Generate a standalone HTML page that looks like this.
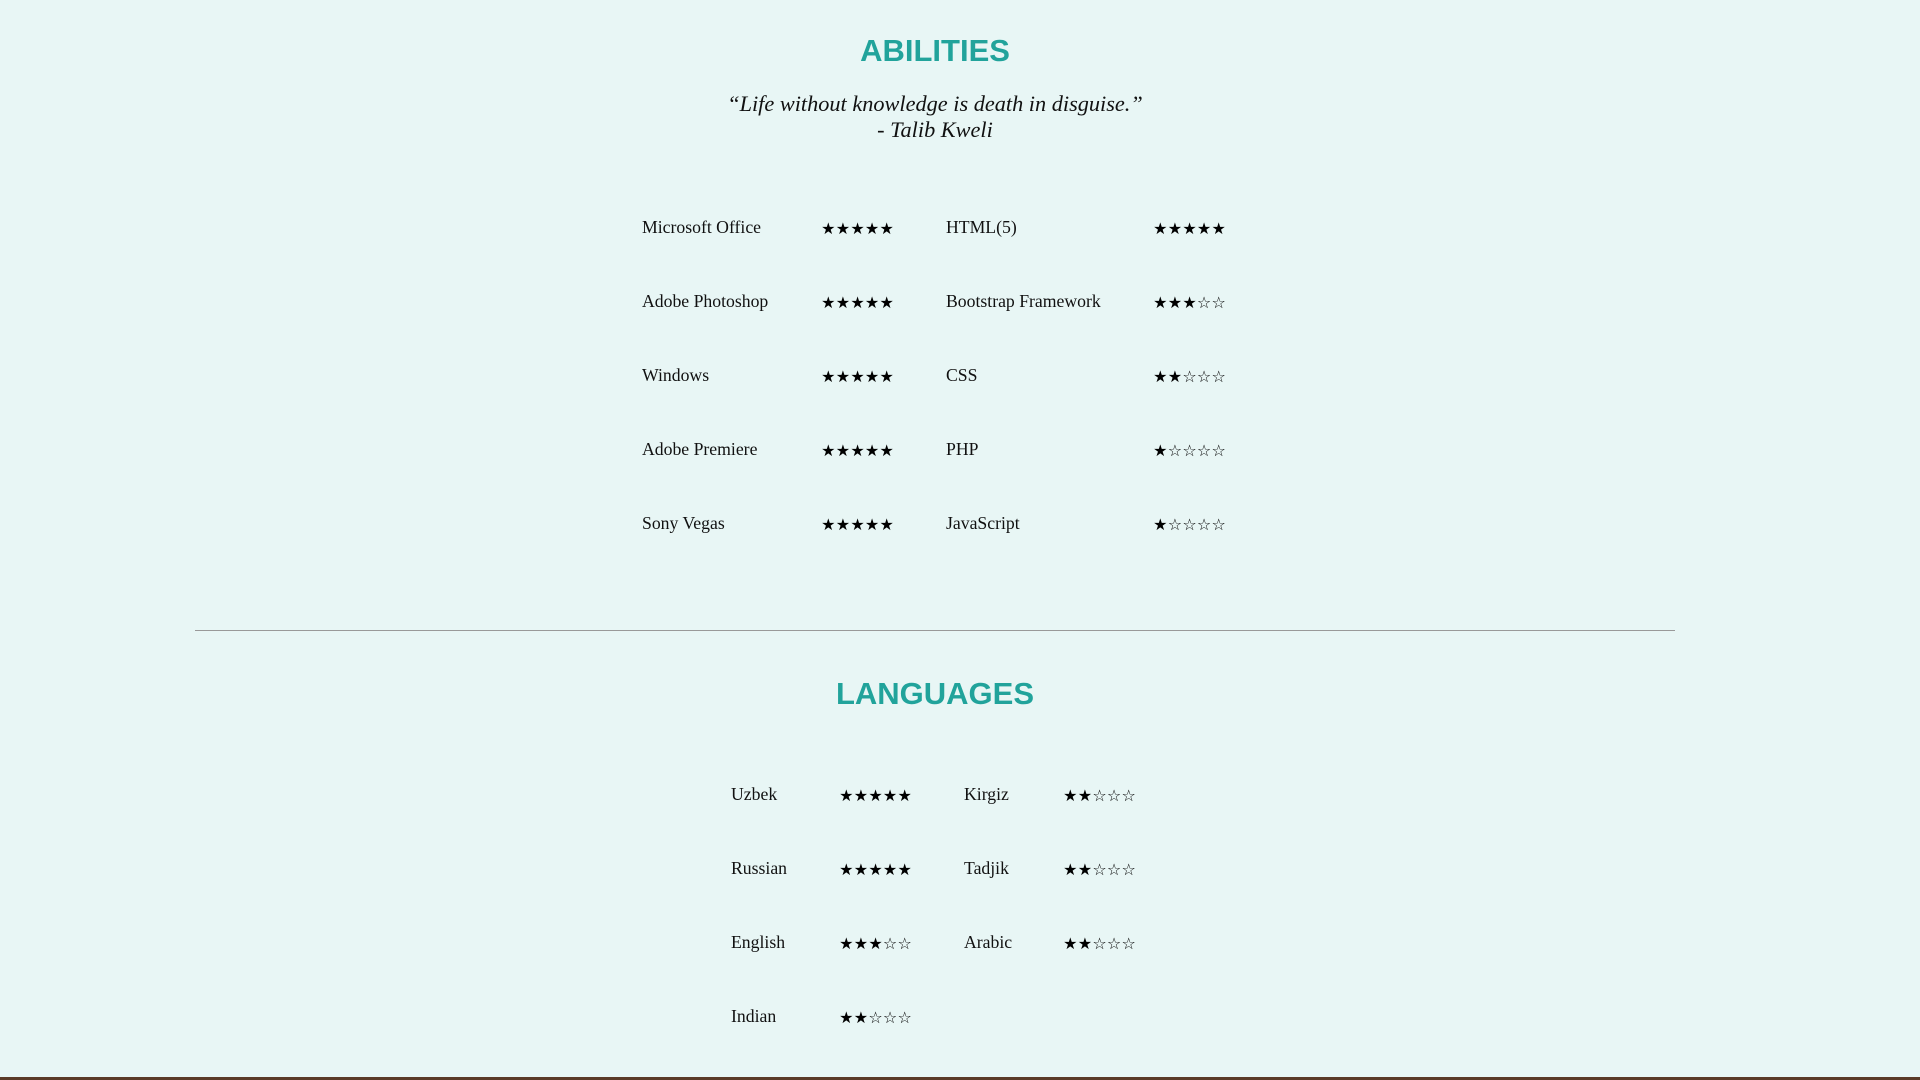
<!DOCTYPE html>
<html><head><meta charset="utf-8"><style>
html,body{margin:0;padding:0;width:1920px;height:1080px;overflow:hidden;background:#e8f6f5;position:relative}
.h{position:absolute;left:0;width:1870px;text-align:center;font-family:"Liberation Sans",Arial,sans-serif;font-weight:bold;font-size:31px;color:#21a39b;margin:0}
.q{position:absolute;left:0;width:1870px;text-align:center;font-family:"Liberation Serif",serif;font-style:italic;font-size:22.3px;line-height:26px;color:#111}
.t{position:absolute;font-family:"Liberation Serif",serif;font-size:17.7px;color:#111;line-height:20px;white-space:nowrap}
.s{position:absolute;font-family:"DejaVu Sans",sans-serif;font-size:16px;line-height:20px;color:#000;white-space:nowrap}
.s span{display:inline-block;width:14.6px;text-align:center}
hr{position:absolute;left:195px;top:630px;width:1480px;margin:0;border:0;border-top:1px solid #999}
.bar{position:absolute;left:0;top:1077px;width:1920px;height:3px;background:#5a3a28}
</style></head><body>
<h1 class="h" style="top:33px">ABILITIES</h1>
<div class="q" style="top:91px">“Life without knowledge is death in disguise.”<br>- Talib Kweli</div>
<hr>
<h1 class="h" style="top:676px">LANGUAGES</h1>
<div class="bar"></div>
<script>
function row(x1,x2,y,name,n){
 var d=document.createElement('div');d.className='t';d.style.left=x1+'px';d.style.top=(y-10)+'px';d.textContent=name;document.body.appendChild(d);
 var s=document.createElement('div');s.className='s';s.style.left=x2+'px';s.style.top=(y-8)+'px';
 var h='';for(var i=0;i<5;i++)h+='<span>'+(i<n?'★':'☆')+'</span>';s.innerHTML=h;document.body.appendChild(s);
}
var ys=[227,301,375,449,523];
[['Microsoft Office',5],['Adobe Photoshop',5],['Windows',5],['Adobe Premiere',5],['Sony Vegas',5]].forEach(function(r,i){row(642,821,ys[i],r[0],r[1])});
[['HTML(5)',5],['Bootstrap Framework',3],['CSS',2],['PHP',1],['JavaScript',1]].forEach(function(r,i){row(946,1153,ys[i],r[0],r[1])});
var ly=[794,868,942,1016];
[['Uzbek',5],['Russian',5],['English',3],['Indian',2]].forEach(function(r,i){row(731,839,ly[i],r[0],r[1])});
[['Kirgiz',2],['Tadjik',2],['Arabic',2]].forEach(function(r,i){row(964,1063,ly[i],r[0],r[1])});
</script>
</body></html>
